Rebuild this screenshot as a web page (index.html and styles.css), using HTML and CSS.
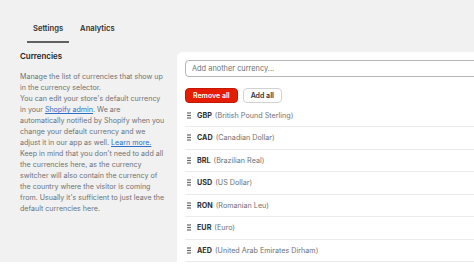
FILE: index.html
```html
<!DOCTYPE html>
<html lang="en">
    <head>
        <meta charset="UTF-8" />
        <link rel="stylesheet" href="styles.css">
    </head>
    <body>
        <div class="page">
            <div class="tabs">
                <div class="tab tab_selected">Settings</div>
                <div class="tab">Analytics</div>
            </div>
            <div class="section">
                <div class="annotation">
                    <h2 class="heading">Currencies</h2>
                    <p class="description">
                        Manage the list of currencies that show up<br />
                        in the currency selector.<br />
                        You can edit your store's default currency<br />
                        in your <a href="#">Shopify admin</a>. We are<br />
                        automatically notified by Shopify when you<br />
                        change your default currency and we<br />
                        adjust it in our app as well. <a href="#">Learn more.</a><br />
                        Keep in mind that you don't need to add all<br />
                        the currencies here, as the currency<br />
                        switcher will also contain the currency of<br />
                        the country where the visitor is coming<br />
                        from. Usually it's sufficient to just leave the<br />
                        default currencies here.
                    </p>
                </div>
                <div class="card">
                    <input class="search" type="text" placeholder="Add another currency..." />
                    <div class="actions">
                        <button class="btn btn_destructive">Remove all</button>
                        <button class="btn">Add all</button>
                    </div>
                    <ul class="currency_list">
                        <li class="currency"><svg class="handle" viewBox="0 0 4 7"><circle cx="1" cy="1" r="0.8"/><circle cx="3" cy="1" r="0.8"/><circle cx="1" cy="3.5" r="0.8"/><circle cx="3" cy="3.5" r="0.8"/><circle cx="1" cy="6" r="0.8"/><circle cx="3" cy="6" r="0.8"/></svg><b>GBP</b>(British Pound Sterling)</li>
                        <li class="currency"><svg class="handle" viewBox="0 0 4 7"><circle cx="1" cy="1" r="0.8"/><circle cx="3" cy="1" r="0.8"/><circle cx="1" cy="3.5" r="0.8"/><circle cx="3" cy="3.5" r="0.8"/><circle cx="1" cy="6" r="0.8"/><circle cx="3" cy="6" r="0.8"/></svg><b>CAD</b>(Canadian Dollar)</li>
                        <li class="currency"><svg class="handle" viewBox="0 0 4 7"><circle cx="1" cy="1" r="0.8"/><circle cx="3" cy="1" r="0.8"/><circle cx="1" cy="3.5" r="0.8"/><circle cx="3" cy="3.5" r="0.8"/><circle cx="1" cy="6" r="0.8"/><circle cx="3" cy="6" r="0.8"/></svg><b>BRL</b>(Brazilian Real)</li>
                        <li class="currency"><svg class="handle" viewBox="0 0 4 7"><circle cx="1" cy="1" r="0.8"/><circle cx="3" cy="1" r="0.8"/><circle cx="1" cy="3.5" r="0.8"/><circle cx="3" cy="3.5" r="0.8"/><circle cx="1" cy="6" r="0.8"/><circle cx="3" cy="6" r="0.8"/></svg><b>USD</b>(US Dollar)</li>
                        <li class="currency"><svg class="handle" viewBox="0 0 4 7"><circle cx="1" cy="1" r="0.8"/><circle cx="3" cy="1" r="0.8"/><circle cx="1" cy="3.5" r="0.8"/><circle cx="3" cy="3.5" r="0.8"/><circle cx="1" cy="6" r="0.8"/><circle cx="3" cy="6" r="0.8"/></svg><b>RON</b>(Romanian Leu)</li>
                        <li class="currency"><svg class="handle" viewBox="0 0 4 7"><circle cx="1" cy="1" r="0.8"/><circle cx="3" cy="1" r="0.8"/><circle cx="1" cy="3.5" r="0.8"/><circle cx="3" cy="3.5" r="0.8"/><circle cx="1" cy="6" r="0.8"/><circle cx="3" cy="6" r="0.8"/></svg><b>EUR</b>(Euro)</li>
                        <li class="currency"><svg class="handle" viewBox="0 0 4 7"><circle cx="1" cy="1" r="0.8"/><circle cx="3" cy="1" r="0.8"/><circle cx="1" cy="3.5" r="0.8"/><circle cx="3" cy="3.5" r="0.8"/><circle cx="1" cy="6" r="0.8"/><circle cx="3" cy="6" r="0.8"/></svg><b>AED</b>(United Arab Emirates Dirham)</li>
                    </ul>
                </div>
            </div>
        </div>
    </body>
</html>
```

FILE: styles.css
```css
* {
    box-sizing: border-box;
}
html, body {
    margin: 0;
    padding: 0;
    background-color: #fff;
    overflow: hidden;
}
body {
    font-family: Inter, "Noto Sans", sans-serif;
    color: #202223;
}
.page {
    height: 262px;
    background-color: #f1f1f1;
}
.tabs {
    display: flex;
    gap: 5px;
    padding: 22px 0 0 27px;
}
.tab {
    font-size: 7.6px;
    font-weight: 600;
    line-height: 13px;
    padding: 0 6px 6px 6px;
    border-bottom: 2px solid transparent;
    color: #303030;
}
.tab_selected {
    border-bottom-color: #616161;
}
.section {
    display: flex;
    gap: 4px;
    margin-top: 7px;
    padding-left: 20px;
}
.annotation {
    width: 153px;
    flex: none;
}
.heading {
    margin: 0;
    font-size: 7.9px;
    font-weight: 600;
    line-height: 12px;
}
.description {
    margin: 9px 0 0 0;
    font-size: 7.1px;
    line-height: 11px;
    color: #6d7175;
    white-space: nowrap;
}
.description a {
    color: #2c6ecb;
}
.card {
    flex: none;
    width: 330px;
    margin-top: 2px;
    height: 230px;
    background-color: #fff;
    border-radius: 6px 0 0 0;
    padding: 8px;
}
.search {
    display: block;
    width: 100%;
    height: 17px;
    border: 1px solid #b5b5b5;
    border-radius: 4px;
    padding: 0 6px;
    font-family: inherit;
    font-size: 7.4px;
    color: #202223;
}
.search::placeholder {
    color: #6d7175;
}
.actions {
    display: flex;
    gap: 5px;
    margin-top: 11px;
}
.btn {
    height: 15px;
    padding: 0 7px;
    border: 1px solid #d2d2d2;
    border-radius: 4px;
    background-color: #fff;
    font-family: inherit;
    font-size: 7px;
    font-weight: 600;
    color: #303030;
}
.btn_destructive {
    background-color: #e51c00;
    border-color: #c31700;
    color: #fff;
}
.currency_list {
    list-style: none;
    margin: 1.5px 0 0 0;
    padding: 0;
}
.currency {
    display: flex;
    align-items: center;
    height: 22.5px;
    padding-left: 2px;
    border-bottom: 1px solid #ebebeb;
    font-size: 7.2px;
    color: #6d7175;
}
.currency b {
    font-weight: 700;
    color: #303030;
    margin-right: 3px;
}
.handle {
    width: 4px;
    height: 7px;
    margin-right: 6px;
    fill: #303030;
}
```
